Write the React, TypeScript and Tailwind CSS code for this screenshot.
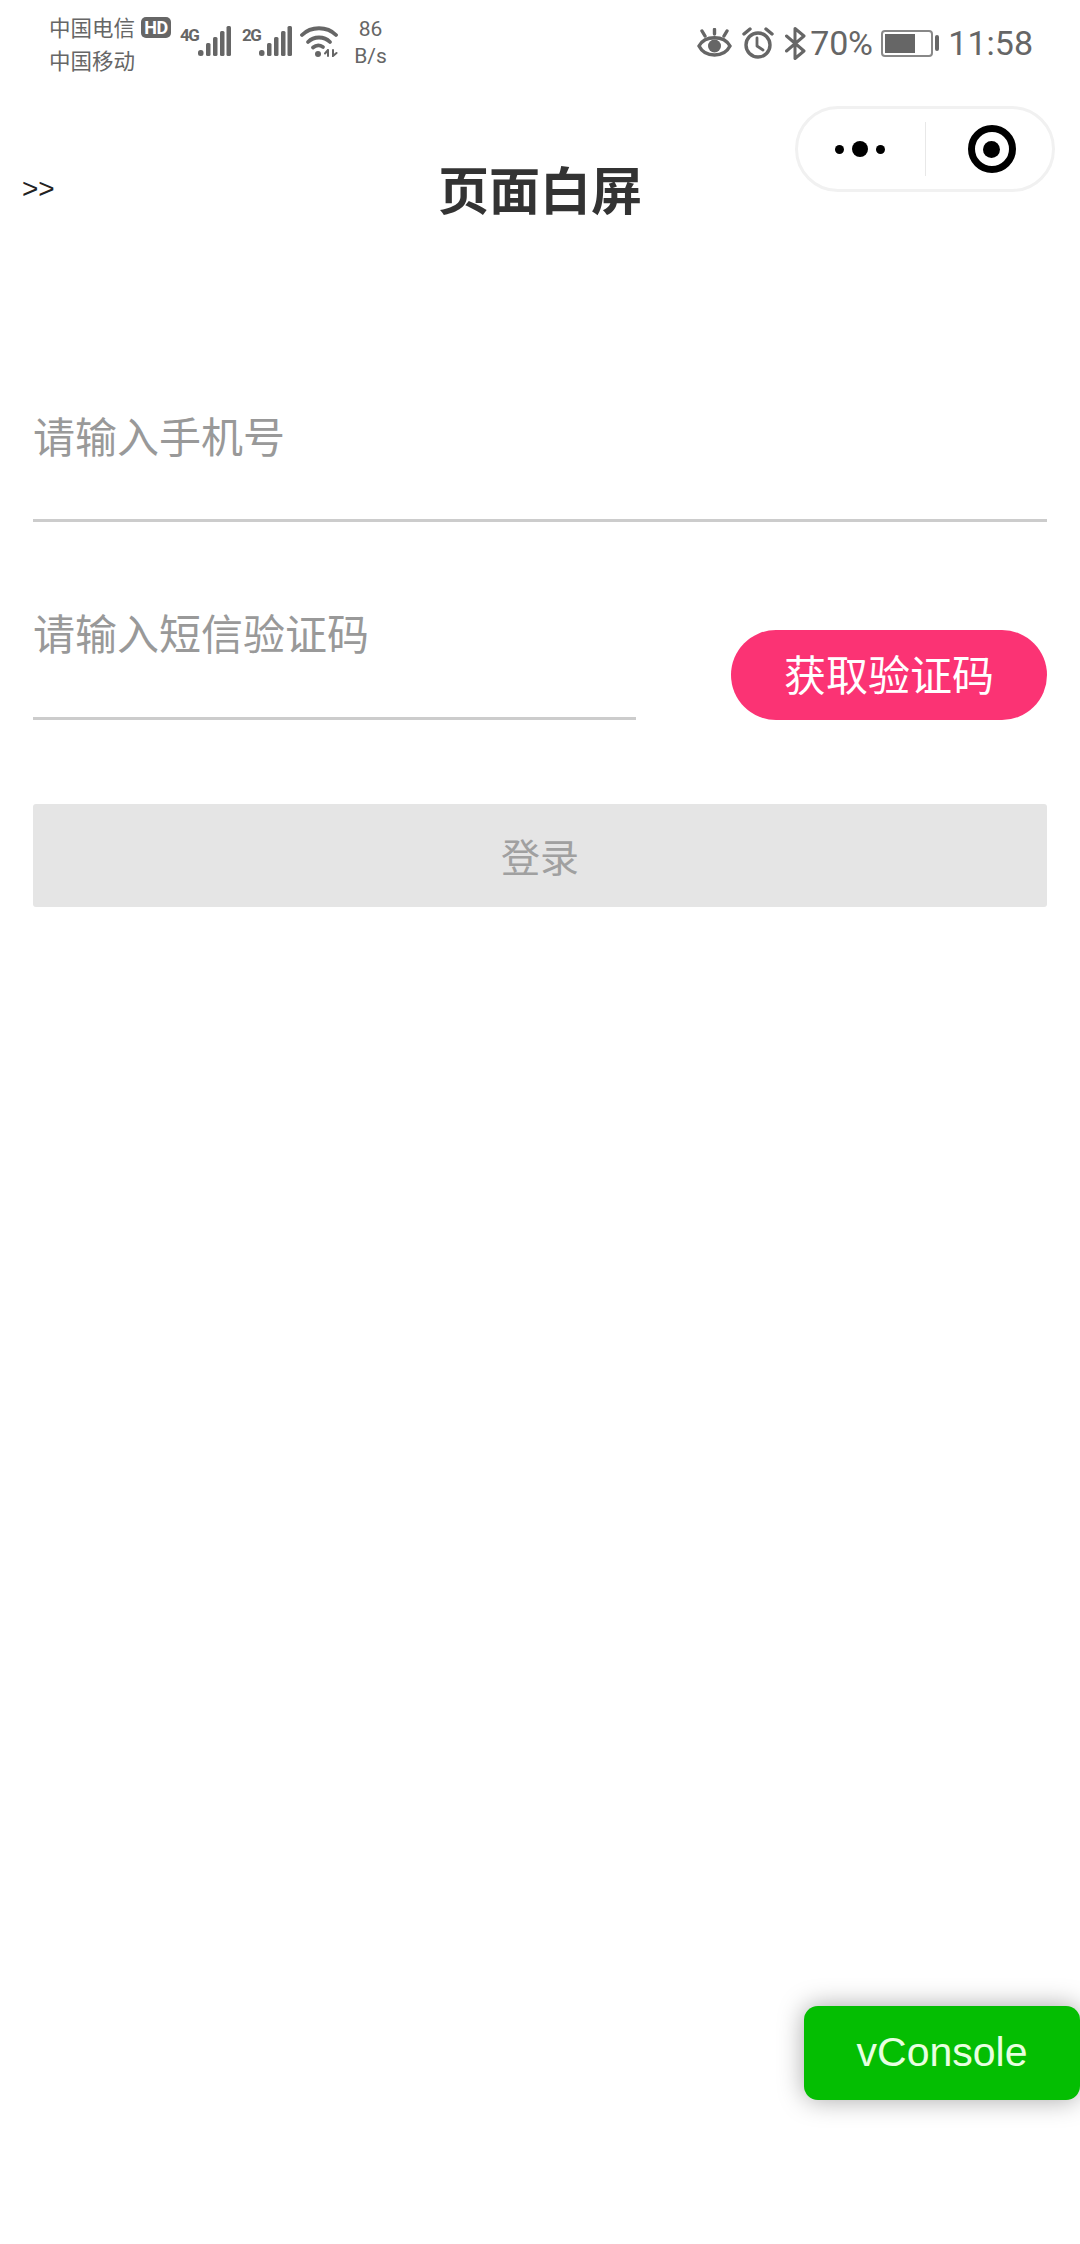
const cjk = "font-['Noto_Sans_CJK_SC','Noto_Sans',sans-serif]";

function Bars() {
  return (
    <svg width="33" height="31" viewBox="0 0 33 31" className="block" fill="#666">
      <rect x="0" y="24" width="5.5" height="6" rx="2.5" />
      <rect x="8" y="17" width="4.5" height="13" rx="1.5" />
      <rect x="15" y="11" width="4.5" height="19" rx="1.5" />
      <rect x="22" y="5" width="4.5" height="25" rx="1.5" />
      <rect x="28.5" y="0" width="4.5" height="30" rx="1.5" />
    </svg>
  );
}

function Wifi() {
  return (
    <svg width="38" height="31" viewBox="0 0 38 31" className="block" fill="none" stroke="#666" strokeWidth="3.8" strokeLinecap="round">
      <path d="M2 9 C11 0 27 0 36 9" />
      <path d="M8 16 C14 10 24 10 30 16" />
      <path d="M13 21.5 C16 19 20 19 23 21" />
      <circle cx="18" cy="28" r="3" fill="#666" stroke="none" />
      <path d="M28 24 L28 30 M25 27.5 L28 24" strokeWidth="2" />
      <path d="M33 24 L33 30 L36.5 27" strokeWidth="2" />
    </svg>
  );
}

function Eye() {
  return (
    <svg width="35" height="30" viewBox="0 0 35 30" className="block" fill="none" stroke="#666" strokeWidth="3.4" strokeLinecap="round">
      <path d="M2 18 C8 7 27 7 33 18 C27 30 8 30 2 18 Z" />
      <circle cx="17.5" cy="18" r="6.5" fill="#666" stroke="none" />
      <path d="M17.5 1.5 L17.5 6 M5 3 L8 8 M30 3 L27 8" />
    </svg>
  );
}

function Alarm() {
  return (
    <svg width="32" height="32" viewBox="0 0 32 32" className="block" fill="none" stroke="#666" strokeWidth="3.4" strokeLinecap="round" strokeLinejoin="round">
      <circle cx="16" cy="18" r="12" />
      <path d="M15 11 L15 19 L21 23" strokeWidth="2.8" />
      <path d="M2 7 L8 2 M30 7 L24 2" />
    </svg>
  );
}

function Bluetooth() {
  return (
    <svg width="21" height="33" viewBox="0 0 21 33" className="block" fill="none" stroke="#666" strokeWidth="3" strokeLinejoin="round" strokeLinecap="round">
      <path d="M1.5 9 L19 24 L10 31.5 L10 1.5 L19 9 L1.5 24" />
    </svg>
  );
}

function Battery() {
  return (
    <div className="flex items-center gap-[2px]">
      <div className="w-[52px] h-[27px] rounded-[4px] border-2 border-[#888] p-[2px]">
        <div className="h-full w-[30px] bg-[#666]" />
      </div>
      <div className="w-[4px] h-[16px] rounded-[2px] bg-[#666]" />
    </div>
  );
}

function StatusBar() {
  return (
    <div className="h-[80px] flex items-start justify-between pl-[49px] pr-[47px] text-[#666]">
      <div className="flex items-start">
        <div className={`${cjk} text-[21.5px] leading-[33px] pt-[10px] w-[92px]`}>
          <div>中国电信</div>
          <div>中国移动</div>
        </div>
        <div className="mt-[17px] w-[30px] h-[21px] rounded-[5px] bg-[#666] text-white text-[18px] leading-[21px] font-bold text-center tracking-[-0.5px] font-['Roboto',sans-serif]">
          HD
        </div>
        <div className="ml-[9px] mt-[26px] flex items-start">
          <span className="text-[17px] leading-[18px] font-bold font-['Roboto',sans-serif] tracking-[-1.5px] w-[18px]">4G</span>
          <Bars />
          <span className="ml-[11px] text-[17px] leading-[18px] font-bold font-['Roboto',sans-serif] tracking-[-1.5px] w-[17px]">2G</span>
          <Bars />
          <div className="ml-[8px]">
            <Wifi />
          </div>
        </div>
        <div className="ml-[16px] pt-[16px] w-[33px] text-center font-['Roboto',sans-serif] text-[21px] leading-[27px]">
          <div>86</div>
          <div>B/s</div>
        </div>
      </div>
      <div className="flex items-center mt-[26px] font-['Roboto',sans-serif]">
        <Eye />
        <div className="ml-[10px]">
          <Alarm />
        </div>
        <div className="ml-[11px]">
          <Bluetooth />
        </div>
        <span className="ml-[4px] text-[34px] leading-[34px] w-[62px] tracking-[-0.3px]">70%</span>
        <div className="ml-[9px]">
          <Battery />
        </div>
        <span className="ml-[9px] text-[34px] leading-[34px]">11:58</span>
      </div>
    </div>
  );
}

function Capsule() {
  return (
    <div className="absolute left-[795px] top-[106px] w-[260px] h-[86px] rounded-[43px] border-[3px] border-[#f1f1f1] bg-white flex items-center">
      <div className="w-[127px] flex items-center justify-center gap-[8px] pr-[3px]">
        <div className="w-[9px] h-[9px] rounded-full bg-black" />
        <div className="w-[16px] h-[16px] rounded-full bg-black" />
        <div className="w-[9px] h-[9px] rounded-full bg-black" />
      </div>
      <div className="w-[1px] h-[54px] bg-[#e8e8e8]" />
      <div className="flex-1 flex items-center justify-center pl-[5px]">
        <div className="w-[48px] h-[48px] rounded-full border-[7px] border-black flex items-center justify-center">
          <div className="w-[17px] h-[17px] rounded-full bg-black" />
        </div>
      </div>
    </div>
  );
}

export default function App() {
  return (
    <div className={`relative w-[1080px] h-[2244px] bg-white overflow-hidden ${cjk}`}>
      <StatusBar />
      <Capsule />
      <div className="relative h-[82px] mt-[67px] flex items-center justify-center">
        <span className="absolute left-[22px] top-[26px] text-[28px] leading-[32px] text-[#222] font-['Liberation_Sans',sans-serif]">&gt;&gt;</span>
        <span className="text-[51px] leading-[60px] font-bold text-[#333]">页面白屏</span>
      </div>
      <div className="px-[33px] pt-[144px]">
        <div className="h-[149px] border-b-[3px] border-[#cccccc] flex items-start">
          <span className="text-[42px] leading-[60px] text-[#999] pt-[32px]">请输入手机号</span>
        </div>
        <div className="flex items-end justify-between">
          <div className="w-[603px] h-[198px] border-b-[3px] border-[#cccccc] flex items-start">
            <span className="text-[42px] leading-[60px] text-[#999] pt-[80px]">请输入短信验证码</span>
          </div>
          <div className="w-[316px] h-[90px] rounded-[45px] bg-[#fb3374] text-white text-[42px] leading-[86px] text-center">
            获取验证码
          </div>
        </div>
        <div className="mt-[84px] h-[103px] rounded-[3px] bg-[#e5e5e5] text-[#a0a0a0] text-[39px] flex items-center justify-center">
          登录
        </div>
      </div>
      <div className="absolute left-[804px] top-[2006px] w-[276px] h-[94px] rounded-[14px] bg-[#04be02] text-[#e8ffe0] text-[41px] flex items-center justify-center font-['Liberation_Sans',sans-serif] shadow-[0_0_26px_rgba(0,0,0,0.35)]">
        vConsole
      </div>
    </div>
  );
}
